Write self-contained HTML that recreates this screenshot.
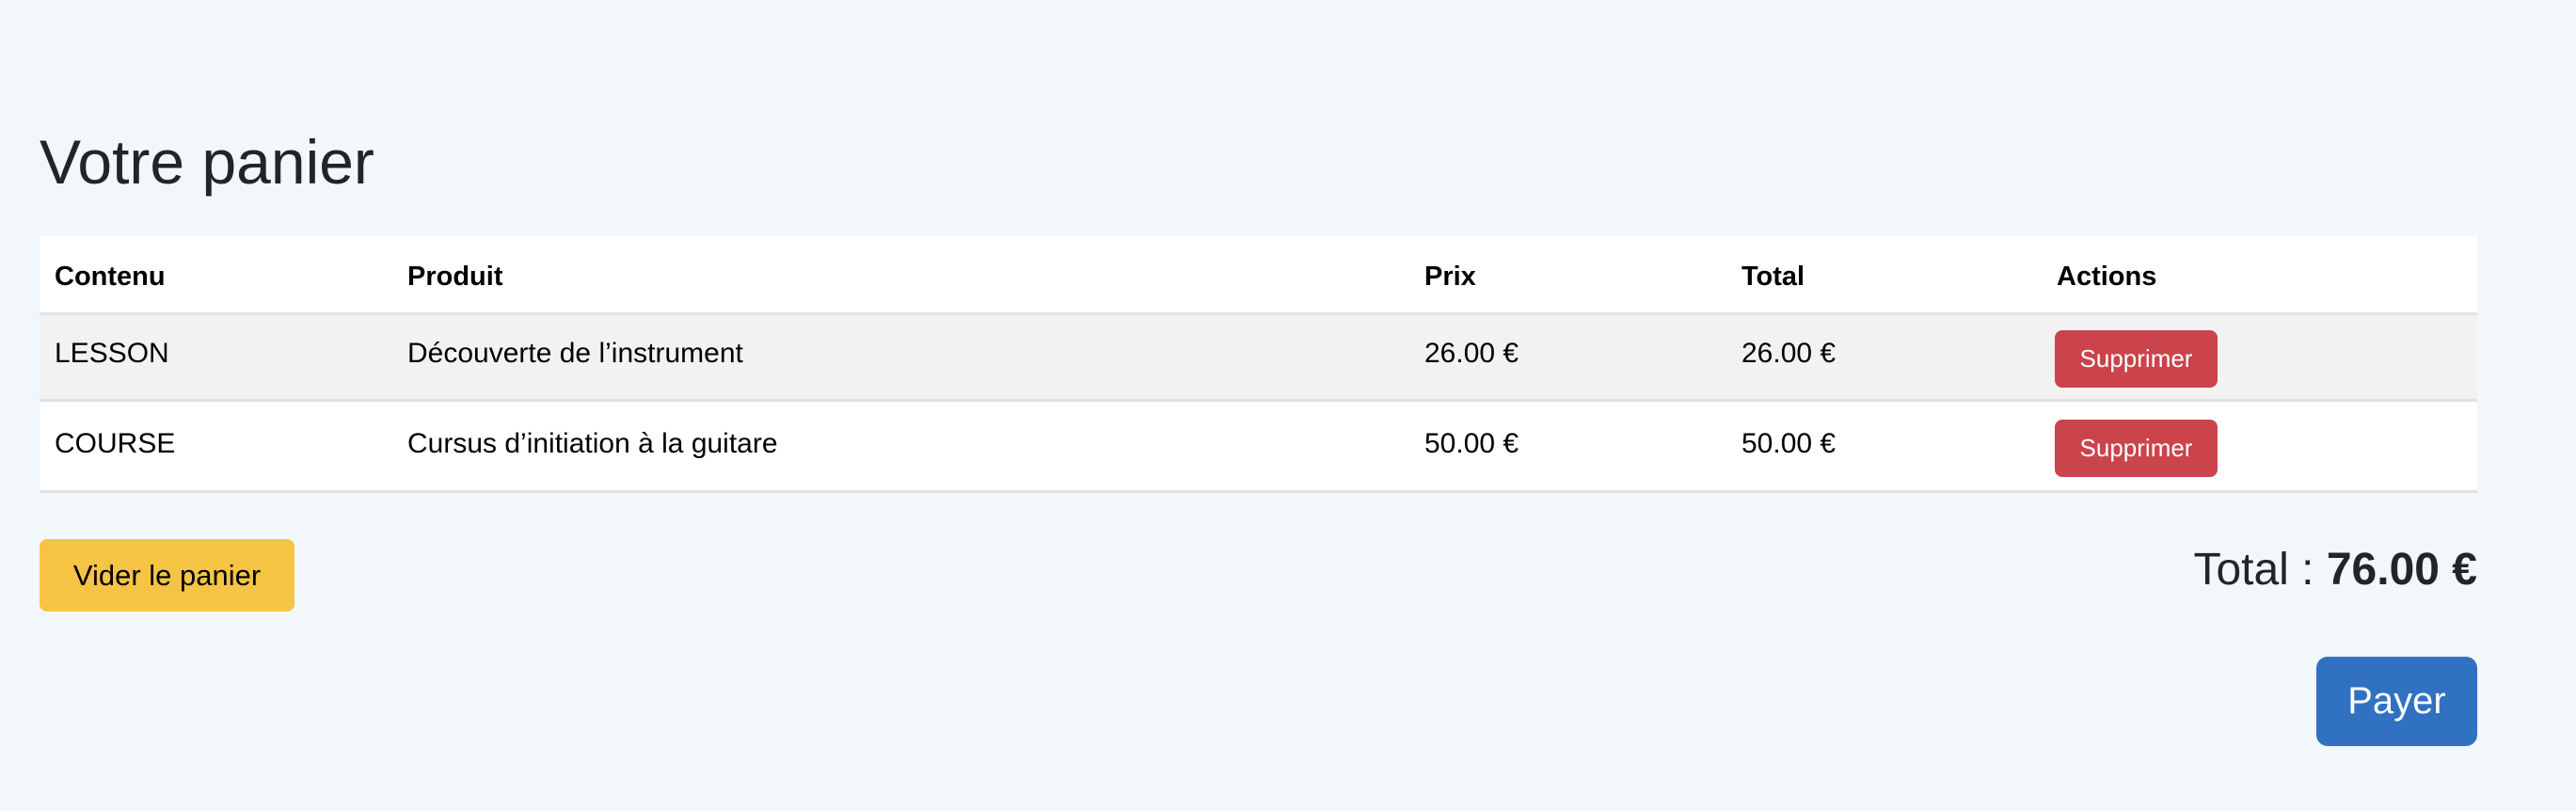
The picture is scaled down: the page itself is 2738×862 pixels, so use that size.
<!DOCTYPE html>
<html><head><meta charset="utf-8"><style>
html,body{margin:0;padding:0}
body{width:2738px;height:862px;background:#f2f7fb;font-family:"Liberation Sans","DejaVu Sans",sans-serif;color:#000;position:relative;overflow:hidden}
.a{position:absolute;white-space:nowrap}
h1{position:absolute;left:42px;top:132px;margin:0;font-weight:400;font-size:66px;color:#212529;line-height:80px}
.tbl{position:absolute;left:42px;top:251px;width:2591px;height:273px;background:#fff}
.row1{position:absolute;left:0;top:81px;width:100%;height:95px;background:#f2f2f2;border-top:3px solid #dee2e6;border-bottom:3px solid #dee2e6;box-sizing:border-box}
.bot{position:absolute;left:0;top:270px;width:100%;height:3px;background:#dee2e6}
.th{font-weight:700;font-size:29px;top:278px}
.td{font-size:30px}
.btn{position:absolute;border-radius:8px;color:#fff;display:flex;align-items:center;justify-content:center}
.del{background:#cb444b;width:173px;height:61px;left:2184px;font-size:26px}
</style></head><body>
<h1>Votre panier</h1>
<div class="tbl"><div class="row1"></div><div class="bot"></div></div>
<div class="a th" style="left:58px">Contenu</div>
<div class="a th" style="left:433px">Produit</div>
<div class="a th" style="left:1514px">Prix</div>
<div class="a th" style="left:1851px">Total</div>
<div class="a th" style="left:2186px">Actions</div>
<div class="a td" style="left:58px;top:359px">LESSON</div>
<div class="a td" style="left:433px;top:359px">Découverte de l’instrument</div>
<div class="a td" style="left:1514px;top:359px">26.00 €</div>
<div class="a td" style="left:1851px;top:359px">26.00 €</div>
<div class="btn del" style="top:351px">Supprimer</div>
<div class="a td" style="left:58px;top:455px">COURSE</div>
<div class="a td" style="left:433px;top:455px">Cursus d’initiation à la guitare</div>
<div class="a td" style="left:1514px;top:455px">50.00 €</div>
<div class="a td" style="left:1851px;top:455px">50.00 €</div>
<div class="btn del" style="top:446px">Supprimer</div>
<div class="btn" style="left:42px;top:573px;width:271px;height:77px;background:#f6c445;color:#000;font-size:31px">Vider le panier</div>
<div class="a" style="right:105px;top:578px;font-size:48px;color:#212529">Total : <b>76.00 €</b></div>
<div class="btn" style="left:2462px;top:698px;width:171px;height:95px;background:#3171c1;font-size:40px;border-radius:12px">Payer</div>
</body></html>
